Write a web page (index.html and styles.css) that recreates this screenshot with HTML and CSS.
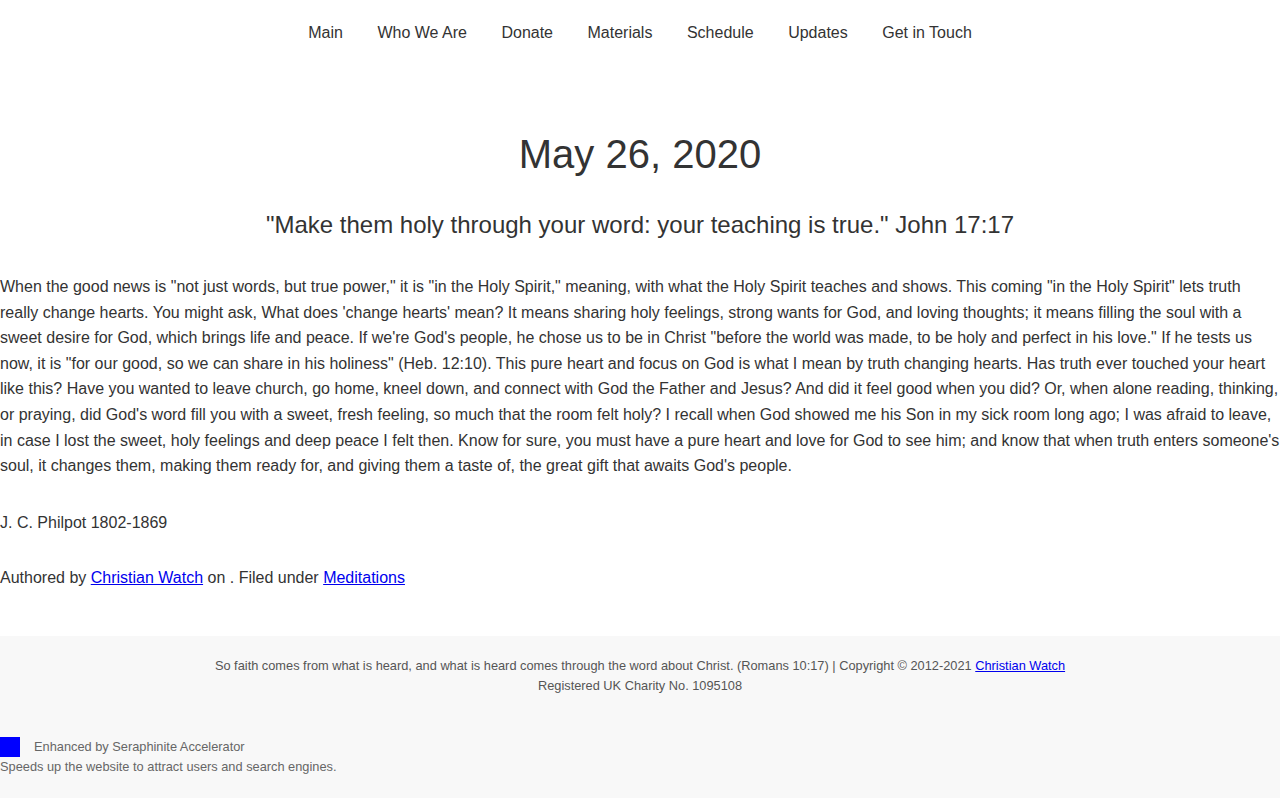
FILE: index.html
```html
<!DOCTYPE html>
<html lang="en">
<head>
<meta charset="utf-8">
<title>May 26, 2020 - Christian Watch</title>
<link rel="stylesheet" href="styles.css">
</head>
<body>
<header class="site-header">
  <nav class="main-nav">
    <a href="#">Main</a>
    <a href="#">Who We Are</a>
    <a href="#">Donate</a>
    <a href="#">Materials</a>
    <a href="#">Schedule</a>
    <a href="#">Updates</a>
    <a href="#">Get in Touch</a>
  </nav>
</header>
<main class="post">
  <h1 class="post-title">May 26, 2020</h1>
  <h2 class="post-verse">"Make them holy through your word: your teaching is true." John 17:17</h2>
  <p class="post-text">When the good news is "not just words, but true power," it is "in the Holy Spirit," meaning, with what the Holy Spirit teaches and shows. This coming "in the Holy Spirit" lets truth really change hearts. You might ask, What does 'change hearts' mean? It means sharing holy feelings, strong wants for God, and loving thoughts; it means filling the soul with a sweet desire for God, which brings life and peace. If we're God's people, he chose us to be in Christ "before the world was made, to be holy and perfect in his love." If he tests us now, it is "for our good, so we can share in his holiness" (Heb. 12:10). This pure heart and focus on God is what I mean by truth changing hearts. Has truth ever touched your heart like this? Have you wanted to leave church, go home, kneel down, and connect with God the Father and Jesus? And did it feel good when you did? Or, when alone reading, thinking, or praying, did God's word fill you with a sweet, fresh feeling, so much that the room felt holy? I recall when God showed me his Son in my sick room long ago; I was afraid to leave, in case I lost the sweet, holy feelings and deep peace I felt then. Know for sure, you must have a pure heart and love for God to see him; and know that when truth enters someone's soul, it changes them, making them ready for, and giving them a taste of, the great gift that awaits God's people.</p>
  <p class="post-text post-author">J. C. Philpot 1802-1869</p>
  <p class="post-text post-meta">Authored by <a href="#">Christian Watch</a> on . Filed under <a href="#">Meditations</a></p>
</main>
<footer class="site-footer">
  <div class="footer-info">
    So faith comes from what is heard, and what is heard comes through the word about Christ. (Romans 10:17) | Copyright © 2012-2021 <a href="#">Christian Watch</a><br>
    Registered UK Charity No. 1095108
  </div>
  <div class="accel">
    <div class="accel-line"><span class="accel-badge"></span><span class="accel-name">Enhanced by Seraphinite Accelerator</span></div>
    <div class="accel-desc">Speeds up the website to attract users and search engines.</div>
  </div>
</footer>
</body>
</html>
```

FILE: styles.css
```css
html, body {
  margin: 0;
  padding: 0;
  background: #ffffff;
}

body {
  font-family: "Liberation Sans", Arial, sans-serif;
  color: #333333;
  font-size: 16px;
  line-height: 1.6;
}

.site-header {
  padding: 21px 0 19px;
}

.main-nav {
  display: flex;
  justify-content: center;
  line-height: 24px;
}

.main-nav a {
  color: #333333;
  text-decoration: none;
  padding: 0 17.25px;
}

.post {
  padding: 66px 0 45px;
}

.post-title {
  margin: 0;
  text-align: center;
  font-weight: normal;
  font-size: 40px;
  line-height: 48px;
}

.post-verse {
  margin: 32px 0 0;
  text-align: center;
  font-weight: normal;
  font-size: 24px;
  line-height: 29px;
}

.post-text {
  margin: 35px 0 0;
  font-size: 16px;
  line-height: 25.6px;
}

.post-author {
  margin-top: 31px;
}

.post-meta {
  margin-top: 30px;
}

.post-text a {
  color: #0000ee;
}

.site-footer {
  background: #f8f8f8;
  padding: 20px 0 22px;
  color: #666666;
}

.footer-info {
  text-align: center;
  font-size: 12.8px;
  line-height: 20px;
  color: #555555;
}

.footer-info a {
  color: #0000ee;
}

.accel {
  margin-top: 41px;
  font-size: 12.8px;
  line-height: 20px;
}

.accel-line {
  display: flex;
  align-items: center;
}

.accel-badge {
  width: 20px;
  height: 20px;
  background: #0000ff;
  margin-right: 14px;
}
```
